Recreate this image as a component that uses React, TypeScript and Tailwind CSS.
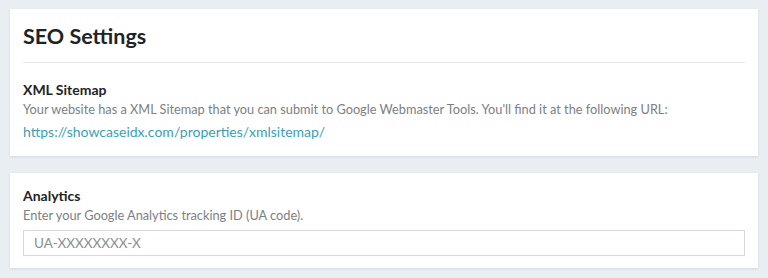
export default function App() {
  return (
    <div className="w-[768px] h-[278px] bg-[#e9eef2] pt-[9px] pl-[10px] pr-[10px]" style={{ fontFamily: 'Lato, "Noto Sans", sans-serif' }}>
      <div className="bg-white h-[147px] px-[13px] pt-[15px] shadow-[0_1px_2px_rgba(160,180,190,0.35)]">
        <h1 className="text-[21.5px] leading-[25px] font-bold text-[#1f2327]">SEO Settings</h1>
        <div className="mt-[13px] border-t border-[#e6e9eb]" />
        <h2 className="mt-[18px] text-[14px] leading-[17px] font-bold text-[#1f2327]">XML Sitemap</h2>
        <p className="mt-[3px] text-[12.75px] leading-[17px] text-[#7b8085]">
          Your website has a XML Sitemap that you can submit to Google Webmaster Tools. You'll find it at the following URL:
        </p>
        <a className="block mt-[5px] text-[14px] leading-[18px] text-[#3a9fb8]">https://showcaseidx.com/properties/xmlsitemap/</a>
      </div>
      <div className="bg-white h-[95px] mt-[17px] px-[13px] pt-[14px] shadow-[0_1px_2px_rgba(160,180,190,0.35)]">
        <h2 className="text-[14px] leading-[17px] font-bold text-[#1f2327]">Analytics</h2>
        <p className="mt-[3px] text-[12.75px] leading-[17px] text-[#7b8085]">Enter your Google Analytics tracking ID (UA code).</p>
        <div className="mt-[6px] h-[26px] border border-[#d5d9dc] pl-[10px] flex items-center">
          <input
            className="w-full h-full bg-transparent text-[13.5px] text-[#333] placeholder:text-[#8a8f93] outline-none"
            placeholder="UA-XXXXXXXX-X"
            style={{ fontFamily: 'Lato, "Noto Sans", sans-serif' }}
          />
        </div>
      </div>
    </div>
  );
}
